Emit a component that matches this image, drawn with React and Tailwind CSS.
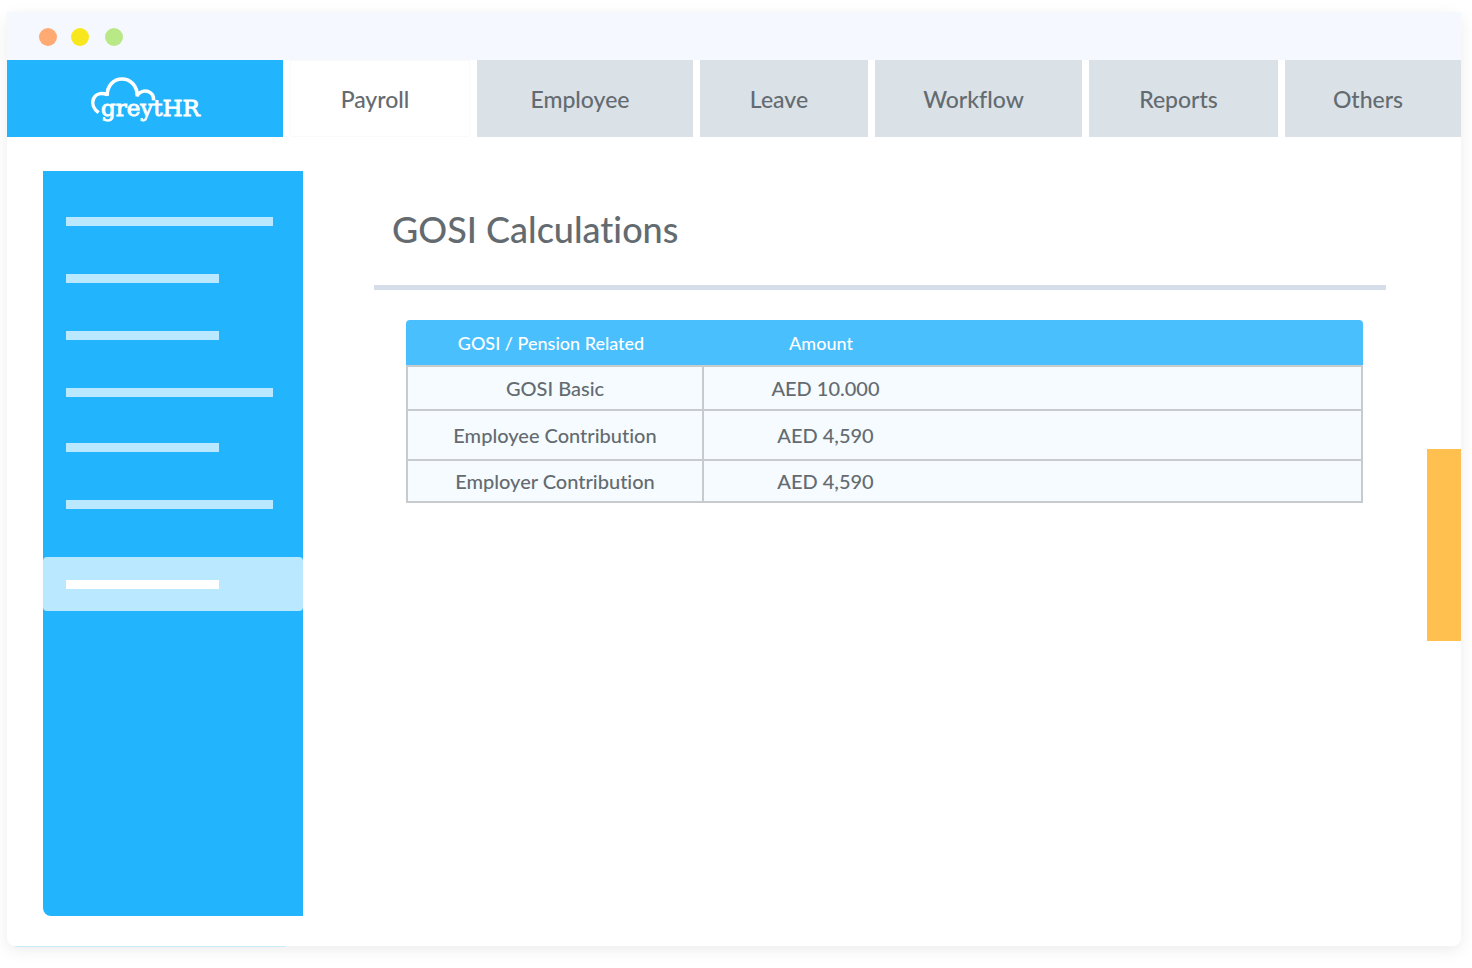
import clsx from "clsx";

const tabs = ["Payroll", "Employee", "Leave", "Workflow", "Reports", "Others"];

const rows = [
  { label: "GOSI Basic", amount: "AED 10.000", height: "h-[46px]" },
  { label: "Employee Contribution", amount: "AED 4,590", height: "h-[50px]" },
  { label: "Employer Contribution", amount: "AED 4,590", height: "h-[42px]" },
];

const Logo = () => (
  <svg viewBox="0 0 114 50" className="h-[50px] w-[114px]" role="img" aria-label="greytHR">
    <g fill="none" stroke="#fff" strokeWidth="3.6">
      <path d="M8.6 36.6C3.6 33 1.6 27.6 3.4 23C5.4 18 10.6 16.4 17.3 18.6" />
      <path d="M17.3 19.9C16.6 10 23.6 3 32 3C40.6 3 47.4 10 47.4 20.6" />
      <path d="M46.8 19.8C49.6 16 54.4 14.2 58.4 15.6C62 17 63.8 20 63.6 24.4" />
    </g>
    <text
      x="11"
      y="40"
      fill="#fff"
      stroke="#fff"
      strokeWidth="0.9"
      fontSize="23"
      fontFamily="'DejaVu Serif', serif"
    >
      greytHR
    </text>
  </svg>
);

const Line = ({ short, active }) => (
  <div className={clsx("h-[9px]", short ? "w-[153px]" : "w-[207px]", active ? "bg-white" : "bg-[#b9e8ff]")} />
);

const Sidebar = () => (
  <aside className="flex w-[260px] shrink-0 flex-col rounded-bl-lg bg-[#22b4fc] pt-[46px]">
    <div className="flex flex-col gap-12 px-[23px]">
      <Line />
      <Line short />
      <Line short />
      <Line />
    </div>
    <div className="mt-[46px] flex flex-col gap-12 px-[23px]">
      <Line short />
      <Line />
    </div>
    <div className="mt-12 flex h-[54px] items-center rounded bg-[#b9e8ff] px-[23px]">
      <Line short active />
    </div>
  </aside>
);

const Table = () => (
  <table className="w-full border-separate border-spacing-0 text-center">
    <thead>
      <tr className="h-[45px] text-lg text-white">
        <th className="w-[298px] rounded-tl bg-[#4abffe] pr-2 font-medium">GOSI / Pension Related</th>
        <th className="rounded-tr bg-[#4abffe] font-medium">
          <span className="block w-[234px]">Amount</span>
        </th>
      </tr>
    </thead>
    <tbody className="bg-[#f5fbff] text-[20px] leading-6 text-[#646b70]">
      {rows.map((row, i) => (
        <tr key={row.label} className={row.height}>
          <td className={clsx("border-x-2 border-b-2 border-[#c8cbcd] font-medium", i === 0 && "border-t-2")}>
            {row.label}
          </td>
          <td className={clsx("border-r-2 border-b-2 border-[#c8cbcd] font-medium", i === 0 && "border-t-2")}>
            <span className="block w-[243px]">{row.amount}</span>
          </td>
        </tr>
      ))}
    </tbody>
  </table>
);

export default function App() {
  return (
    <div className="min-h-screen bg-white pt-3 pr-[11px] pb-[22px] pl-[7px] font-['Lato',sans-serif] [font-variant-ligatures:none]">
      <div className="relative rounded-lg bg-white shadow-[0_4px_16px_rgba(0,0,0,0.08)]">
        <div className="flex h-12 items-center bg-[#f5f8ff] px-8 pt-0.5">
          <span className="size-[18px] rounded-full bg-[#ffa973]" />
          <span className="ml-3.5 size-[18px] rounded-full bg-[#f8e71c]" />
          <span className="ml-4 size-[18px] rounded-full bg-[#b8e986]" />
        </div>

        <nav className="grid h-[77px] grid-cols-[276fr_180fr_216fr_168fr_207fr_189fr_176fr] gap-x-[7px]">
          <div className="flex items-center justify-center bg-[#22b4fc] pt-1 pl-1">
            <Logo />
          </div>
          {tabs.map((tab) => (
            <button
              key={tab}
              type="button"
              className={clsx(
                "pt-0.5 pr-2.5 text-[23px] font-medium text-[#646b70]",
                tab === "Payroll" ? "border border-[#fafafa] bg-white" : "bg-[#dae2e8]"
              )}
            >
              {tab}
            </button>
          ))}
        </nav>

        <div className="flex min-h-[809px] pt-[34px] pb-[30px] pl-9">
          <Sidebar />
          <main className="ml-[71px] flex-1 pt-[35px]">
            <h1 className="pl-[18px] text-[36px] leading-[46px] font-medium text-[#646b70]">GOSI Calculations</h1>
            <hr className="mt-[33px] border-0 border-t-5 border-[#d5dee8]" />
            <div className="mt-[30px] pr-[23px] pl-8">
              <Table />
            </div>
          </main>
          <div className="mt-[278px] ml-[41px] h-48 w-[34px] bg-[#ffc04f]" />
        </div>
        <div className="absolute -bottom-px left-2 h-px w-[270px] bg-[#c9ebf8]" />
      </div>
    </div>
  );
}
